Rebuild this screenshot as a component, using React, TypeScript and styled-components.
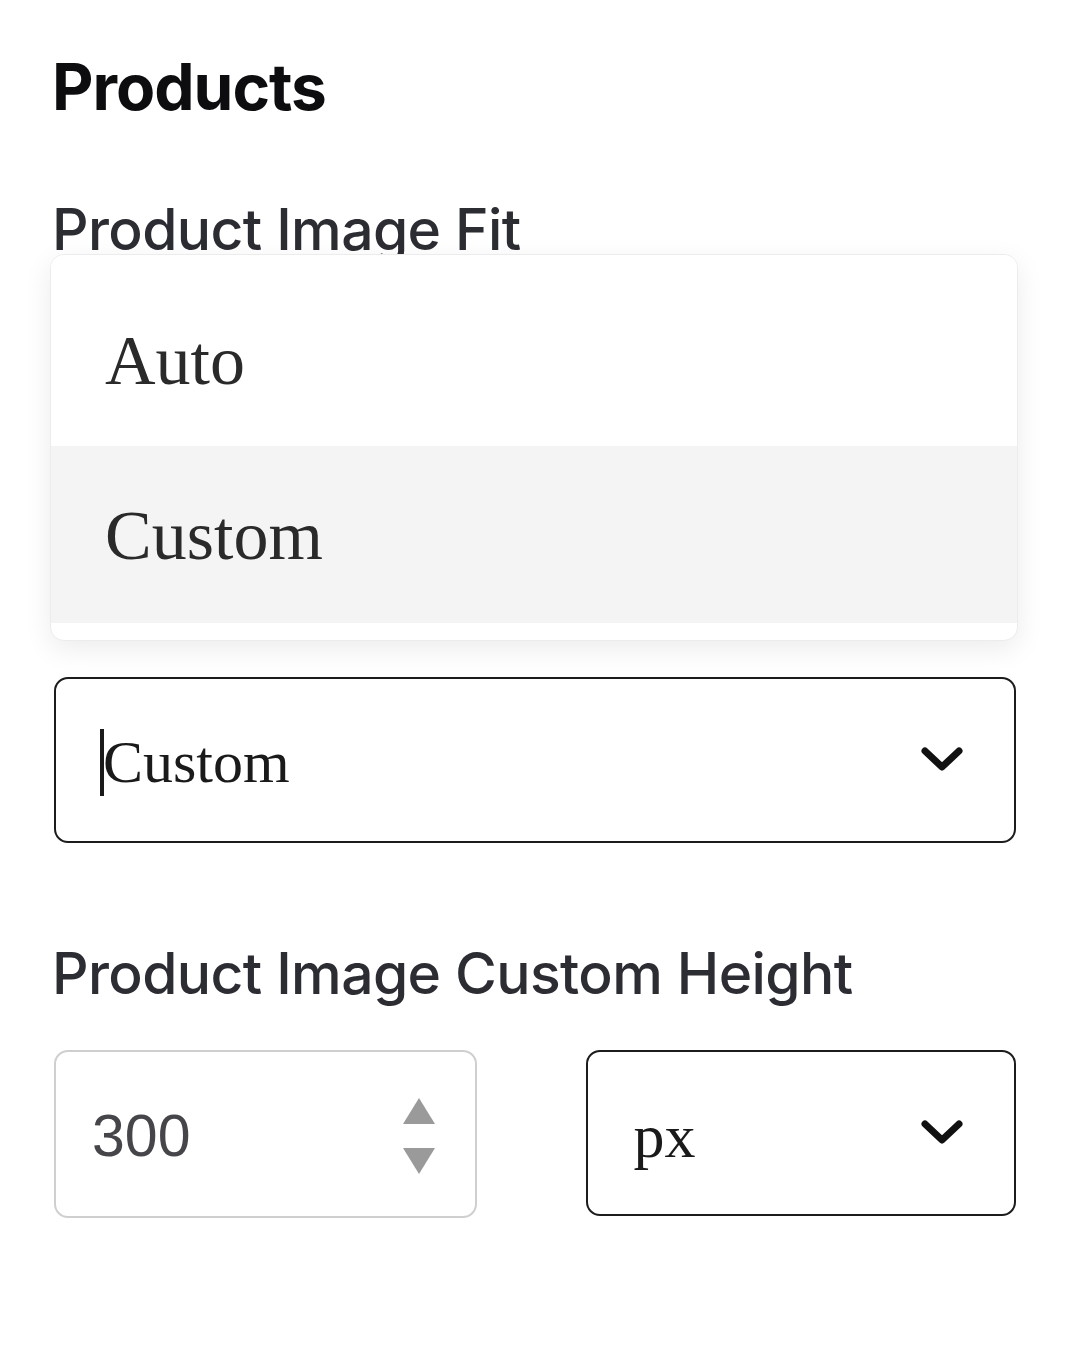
import React from 'react';
import styled, { createGlobalStyle } from 'styled-components';

const GlobalStyle = createGlobalStyle`
  html, body {
    margin: 0;
    padding: 0;
    background: #ffffff;
  }
`;

const Chevron = () => (
  <svg width='44' height='30' viewBox='0 0 44 30' fill='none'>
    <path d='M5 6 L22 22 L39 6' stroke='#111' strokeWidth='7' strokeLinecap='round' strokeLinejoin='round' />
  </svg>
);

const Spinner = () => (
  <svg width='36' height='80' viewBox='0 0 36 80' fill='#9a9a9a'>
    <path d='M18 2 L34 28 L2 28 Z' />
    <path d='M2 52 L34 52 L18 78 Z' />
  </svg>
);

export default function App() {
  return (
    <>
      <GlobalStyle />
      <Page>
        <Heading>Products</Heading>

        <Label>Product Image Fit</Label>
        <SelectWrap>
          <Menu>
            <Option>Auto</Option>
            <Option active>Custom</Option>
          </Menu>
          <Select>
            <SelectValue>
              <Caret />
              Custom
            </SelectValue>
            <Chevron />
          </Select>
        </SelectWrap>

        <Label second>Product Image Custom Height</Label>
        <Row>
          <NumberBox>
            <NumberValue>300</NumberValue>
            <Spinner />
          </NumberBox>
          <Select small>
            <SelectValue small>px</SelectValue>
            <Chevron />
          </Select>
        </Row>
      </Page>
    </>
  );
}

const Page = styled.div`
  width: 964px;
  padding: 52px 64px 120px 52px;
  display: flex;
  flex-direction: column;
`;

const Heading = styled.h1`
  margin: 0;
  font-family: Inter, 'Liberation Sans', sans-serif;
  font-weight: 700;
  font-size: 64px;
  line-height: 70px;
  letter-spacing: -1px;
  color: #0d0d10;
`;

const Label = styled.div<{ second?: boolean }>`
  margin-top: ${({ second }) => (second ? '99px' : '76px')};
  font-family: Inter, 'Liberation Sans', sans-serif;
  font-weight: 500;
  font-size: 57px;
  line-height: 64px;
  letter-spacing: -0.6px;
  color: #2c2c33;
`;

const SelectWrap = styled.div`
  position: relative;
  margin-top: 415px;
`;

const Menu = styled.div`
  position: absolute;
  left: -2px;
  right: -2px;
  bottom: calc(100% + 36px);
  height: 387px;
  box-sizing: border-box;
  padding-bottom: 17px;
  background: #ffffff;
  border-radius: 14px;
  border: 1px solid #ececec;
  box-shadow: 0 8px 28px rgba(0, 0, 0, 0.08);
  overflow: hidden;
  display: flex;
  flex-direction: column;
`;

const Option = styled.div<{ active?: boolean }>`
  flex: ${({ active }) => (active ? '0 0 175px' : '1')};
  display: flex;
  align-items: center;
  padding-left: 54px;
  padding-top: ${({ active }) => (active ? '2px' : '20px')};
  background: ${({ active }) => (active ? '#f4f4f4' : '#ffffff')};
  font-family: 'Liberation Serif', serif;
  font-size: 70px;
  color: #2a2a2a;
`;

const Select = styled.div<{ small?: boolean }>`
  box-sizing: border-box;
  height: 166px;
  width: ${({ small }) => (small ? '430px' : '962px')};
  margin-left: ${({ small }) => (small ? '0' : '2px')};
  border: 2.5px solid #1c1c1c;
  border-radius: 14px;
  background: #fff;
  display: flex;
  align-items: center;
  justify-content: space-between;
  padding: 0 50px 0 ${({ small }) => (small ? '45px' : '44px')};
`;

const SelectValue = styled.div<{ small?: boolean }>`
  display: flex;
  align-items: center;
  font-family: 'Liberation Serif', serif;
  font-size: ${({ small }) => (small ? '62px' : '60px')};
  color: #1a1a1a;
  margin-top: ${({ small }) => (small ? '6px' : '4px')};
`;

const Caret = styled.span`
  display: inline-block;
  width: 4px;
  height: 67px;
  margin-right: -1px;
  background: #1a1a1a;
`;

const Row = styled.div`
  margin-top: 44px;
  margin-left: 2px;
  display: flex;
  gap: 109px;
`;

const NumberBox = styled.div`
  box-sizing: border-box;
  width: 424px;
  height: 168px;
  border: 2px solid #cfcfcf;
  border-radius: 14px;
  display: flex;
  align-items: center;
  justify-content: space-between;
  padding: 4px 38px 0 36px;
`;

const NumberValue = styled.div`
  font-family: 'Liberation Sans', Arial, sans-serif;
  font-size: 59px;
  color: #45454a;
`;
